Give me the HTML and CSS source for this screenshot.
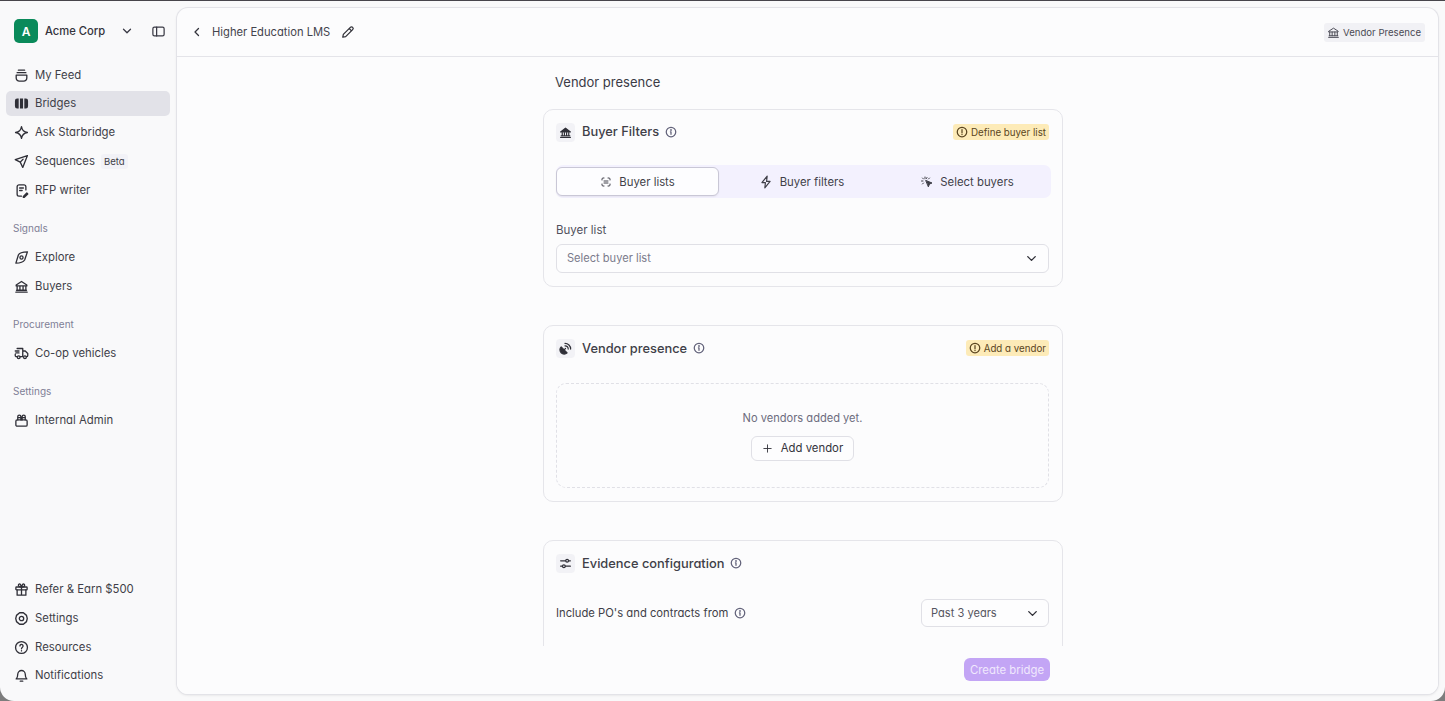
FILE: index.html
```html
<!DOCTYPE html>
<html lang="en">
<head>
<meta charset="utf-8">
<title>Higher Education LMS</title>
<link rel="stylesheet" href="styles.css">
</head>
<body>
<svg class="defs" width="0" height="0" aria-hidden="true">
  <defs>
    <symbol id="i-bank" viewBox="0 0 24 24"><path d="M3 21h18M4 18h16M5 18v-7M9.500 18v-7M14.500 18v-7M19 18v-7M3.500 11h17v-1.500L12 4 3.500 9.500z"/></symbol>
    <symbol id="i-info" viewBox="0 0 24 24"><circle cx="12" cy="12" r="9.500"/><path d="M12 16.500v-5M10.800 11.500H12"/><circle class="dot" cx="12" cy="8" r="0.600"/></symbol>
    <symbol id="i-alert" viewBox="0 0 24 24"><circle cx="12" cy="12" r="9.500"/><path d="M12 7v6.500M12 16.500v.5"/></symbol>
    <symbol id="i-chev" viewBox="0 0 24 24"><path d="M6 9l6 6 6-6"/></symbol>
  </defs>
</svg>
<div class="window">
  <aside class="sidebar">
    <div class="org">
      <span class="avatar">A</span>
      <span class="org-name">Acme Corp</span>
      <svg class="ic ic-chev"><use href="#i-chev"/></svg>
      <svg class="ic ic-panel" viewBox="0 0 24 24"><rect x="3" y="5" width="18" height="14" rx="2.500"/><path d="M9 5v14"/></svg>
    </div>
    <nav class="nav nav-main">
      <a class="item item-first"><svg class="ic" viewBox="0 0 24 24"><path d="M7 3.500h10M5 7.500h14M3.500 11.500h17V16a5 5 0 0 1-5 5h-7a5 5 0 0 1-5-5z"/></svg>My Feed</a>
      <a class="item active"><svg class="ic" viewBox="0 0 24 24"><path class="fill-only" d="M7.500 4H5a3.500 3.500 0 0 0-3.500 3.500v9A3.500 3.500 0 0 0 5 20h2.500zM9.500 4h5v16h-5zM16.500 4H19a3.500 3.500 0 0 1 3.500 3.500v9A3.500 3.500 0 0 1 19 20h-2.500z"/></svg>Bridges</a>
      <a class="item"><svg class="ic" viewBox="0 0 24 24"><path d="M12 2.500c.8 5.200 4.300 8.700 9.500 9.500-5.200.8-8.700 4.300-9.500 9.500-.8-5.200-4.300-8.700-9.500-9.500 5.200-.8 8.700-4.300 9.500-9.500z"/></svg>Ask Starbridge</a>
      <a class="item"><svg class="ic" viewBox="0 0 24 24"><path d="M21.500 2.500L2 9l8 4 4 8.500zM10 13l4.500-4.500"/></svg>Sequences<span class="beta">Beta</span></a>
      <a class="item"><svg class="ic" viewBox="0 0 24 24"><path d="M19 11V6a3 3 0 0 0-3-3H8a3 3 0 0 0-3 3v12a3 3 0 0 0 3 3h4M9 8h6M9 12h4M15 21.500l5.500-5.500 1.500 1.500-5.500 5.500H15z"/></svg>RFP writer</a>
    </nav>
    <div class="group-label">Signals</div>
    <nav class="nav">
      <a class="item"><svg class="ic" viewBox="0 0 24 24"><path d="M21.500 3c-6 0-12.500 .5-14.500 5L3 21c5.500 0 11.500-1 14-5z"/><circle cx="12" cy="12" r="2.500"/></svg>Explore</a>
      <a class="item"><svg class="ic" viewBox="0 0 24 24"><use href="#i-bank"/></svg>Buyers</a>
    </nav>
    <div class="group-label">Procurement</div>
    <nav class="nav">
      <a class="item"><svg class="ic" viewBox="0 0 24 24"><path d="M5 4h9v13H10M5 17H4a2 2 0 0 1-2-2V13M14 8h4l4 4v3a2 2 0 0 1-2 2M2 8h6M3 11h5"/><circle cx="7.500" cy="18" r="2.200"/><circle cx="17.500" cy="18" r="2.200"/></svg>Co-op vehicles</a>
    </nav>
    <div class="group-label">Settings</div>
    <nav class="nav">
      <a class="item"><svg class="ic" viewBox="0 0 24 24"><rect x="3" y="11" width="18" height="10" rx="2"/><path d="M6 11V6a2.500 2.500 0 0 1 5 0v5M13 11V6a2.500 2.500 0 0 1 5 0v5M6 7.500h5M13 7.500h5"/></svg>Internal Admin</a>
    </nav>
    <nav class="nav nav-bottom">
      <a class="item"><svg class="ic" viewBox="0 0 24 24"><rect x="3" y="8" width="18" height="4.500" rx="1"/><path d="M5 12.500V21h14v-8.500M12 8v13M12 8C9 8 7 6.500 7 5s2-2.500 3-1.500S12 8 12 8zM12 8c3 0 5-1.500 5-3s-2-2.500-3-1.500S12 8 12 8z"/></svg>Refer &amp; Earn $500</a>
      <a class="item"><svg class="ic" viewBox="0 0 24 24"><path d="M9 2.800h6l5 4.200 1.200 5-1.200 5-5 4.200H9l-5-4.200L2.800 12 4 7z"/><circle cx="12" cy="12" r="3.500"/></svg>Settings</a>
      <a class="item"><svg class="ic" viewBox="0 0 24 24"><circle cx="12" cy="12" r="9.500"/><path d="M9.500 9.500a2.500 2.500 0 1 1 4 2c-1 .7-1.500 1.200-1.500 2.500M12 17v.5"/></svg>Resources</a>
      <a class="item"><svg class="ic" viewBox="0 0 24 24"><path d="M6 10a6 6 0 0 1 12 0c0 4 1 6 2.500 7.500h-17C5 16 6 14 6 10zM10 21h4"/></svg>Notifications</a>
    </nav>
  </aside>

  <main class="panel">
    <header class="topbar">
      <svg class="ic ic-back" viewBox="0 0 24 24"><path d="M15 5l-7 7 7 7"/></svg>
      <span class="page-title">Higher Education LMS</span>
      <svg class="ic ic-edit" viewBox="0 0 24 24"><path d="M3 21l1-5L16 4a2.800 2.800 0 0 1 4 4L8 20zM14 6l4 4"/></svg>
      <span class="tag"><svg class="ic" viewBox="0 0 24 24"><use href="#i-bank"/></svg>Vendor Presence</span>
    </header>

    <div class="scroller">
      <div class="column">
        <h1 class="heading">Vendor presence</h1>

        <section class="card card-filters">
          <div class="card-head">
            <span class="chip"><svg class="ic" viewBox="0 0 24 24"><path class="solid" d="M3 11l9-7 9 7z"/><path d="M3 21h18M4 18h16M6 18v-6M10 18v-6M14 18v-6M18 18v-6"/></svg></span>
            <h2 class="card-title">Buyer Filters</h2>
            <svg class="ic ic-info"><use href="#i-info"/></svg>
            <span class="warn"><svg class="ic"><use href="#i-alert"/></svg>Define buyer list</span>
          </div>
          <div class="tabs">
            <button class="tab selected"><svg class="ic" viewBox="0 0 24 24"><path d="M4 8V6a2 2 0 0 1 2-2h2M16 4h2a2 2 0 0 1 2 2v2M20 16v2a2 2 0 0 1-2 2h-2M8 20H6a2 2 0 0 1-2-2v-2M8 10h8M8 14h8"/></svg>Buyer lists</button>
            <button class="tab tab-mid"><svg class="ic ic-tab" viewBox="0 0 24 24"><path d="M14 2L5 13h6l-1 9 9-11h-6z"/></svg>Buyer filters</button>
            <button class="tab tab-last"><svg class="ic" viewBox="0 0 24 24"><path class="solid" d="M10 9l12 5-5 2-2 5z"/><path d="M8 2v3M3 4l2 2M1 10h3M3 16l2-2M12 3l-1 2M17 4l-2 2"/></svg>Select buyers</button>
          </div>
          <label class="field-label">Buyer list</label>
          <div class="select select-wide"><span>Select buyer list</span><svg class="ic ic-chev"><use href="#i-chev"/></svg></div>
        </section>

        <section class="card card-vendor">
          <div class="card-head">
            <span class="chip"><svg class="ic" viewBox="0 0 24 24"><path class="solid" d="M4 9a7.500 7.500 0 0 0 11 11z"/><path d="M9 15l3-3M17 13a6 6 0 0 0-6-6M21.500 13A10.500 10.500 0 0 0 11 2.500"/></svg></span>
            <h2 class="card-title">Vendor presence</h2>
            <svg class="ic ic-info"><use href="#i-info"/></svg>
            <span class="warn"><svg class="ic"><use href="#i-alert"/></svg>Add a vendor</span>
          </div>
          <div class="empty">
            <p class="empty-text">No vendors added yet.</p>
            <button class="add"><svg class="ic" viewBox="0 0 24 24"><path d="M12 4v16M4 12h16"/></svg>Add vendor</button>
          </div>
        </section>

        <section class="card card-evidence">
          <div class="card-head">
            <span class="chip"><svg class="ic" viewBox="0 0 24 24"><path d="M3 7h9M18 7h3M3 17h3M12 17h9"/><circle cx="15" cy="7" r="2.600"/><circle cx="9" cy="17" r="2.600"/></svg></span>
            <h2 class="card-title">Evidence configuration</h2>
            <svg class="ic ic-info"><use href="#i-info"/></svg>
          </div>
          <div class="row">
            <span class="row-label">Include PO's and contracts from</span>
            <svg class="ic ic-info"><use href="#i-info"/></svg>
            <div class="select select-small"><span>Past 3 years</span><svg class="ic ic-chev"><use href="#i-chev"/></svg></div>
          </div>
        </section>
      </div>
    </div>

    <footer class="footer"><button class="create">Create bridge</button></footer>
  </main>
</div>
</body>
</html>
```
FILE: styles.css
```css
* { box-sizing: border-box; }
html, body { height: 100%; margin: 0; }
body {
  background: #7d7d7d;
  font-family: Inter, "Liberation Sans", sans-serif;
  font-feature-settings: "cv11";
  color: #3a3a45;
  overflow: hidden;
}
.defs { position: absolute; }
.window {
  height: 701px;
  border-top: 1px solid #47454b;
  border-radius: 0 0 14px 14px;
  background: #f9f9fa;
  display: flex;
  padding: 7px 7px 7px 0;
  overflow: hidden;
}
.ic {
  width: 14px; height: 14px;
  fill: none; stroke: currentColor; stroke-width: 2;
  stroke-linecap: round; stroke-linejoin: round;
  flex: none;
}
.solid { fill: currentColor; }
.fill-only { fill: currentColor; stroke: none; }
.sidebar {
  width: 177px; flex: none;
  display: flex; flex-direction: column;
  padding: 0 7px 0 6px;
}
.org {
  display: flex; align-items: center;
  height: 24px; margin: 11px 0 0 8px;
}
.avatar {
  width: 24px; height: 24px; border-radius: 5px;
  background: #0a8a5a; color: #fff;
  font-size: 12px; font-weight: 600;
  display: flex; align-items: center; justify-content: center;
}
.org-name { font-size: 11.200px; font-weight: 500; margin-left: 7px; color: #34343c; width: 75px; white-space: nowrap; }
.org .ic-chev { width: 14px; height: 14px; stroke-width: 2.200; }
.org .ic-panel { width: 15px; height: 15px; margin-left: 17px; stroke-width: 2; }
.nav { display: flex; flex-direction: column; }
.nav-main { margin-top: 18px; }
.item {
  height: 26px; margin-bottom: 3px;
  border-radius: 5px;
  display: flex; align-items: center; gap: 6px;
  padding-left: 8px;
  font-size: 11.350px; color: #3f3f48;
  white-space: nowrap;
}
.item:last-child { margin-bottom: 0; }
.item-first { padding-top: 2px; margin-bottom: 4px; }
.item .ic { width: 15px; height: 15px; stroke-width: 2.100; color: #2f2f37; }
.item.active { background: #e2e2e8; height: 25px; padding-bottom: 1px; }
.beta {
  font-size: 9.600px; background: #f2f2f7; border-radius: 3px;
  padding: 2px 3px; color: #3f3f48;
}
.group-label { font-size: 10px; color: #7f7f96; margin: 19px 0 10px 7px; height: 12px; line-height: 12px; }
.nav-bottom { margin-top: auto; margin-bottom: 6px; }
.nav-bottom .item:last-child { margin-top: -1px; }
.panel {
  flex: 1; min-width: 0;
  background: #fcfcfd;
  border-radius: 11px;
  box-shadow: 0 0 0 1px #e3e3e8, 0 1px 3px rgba(0,0,0,.12);
  display: flex; flex-direction: column;
  overflow: hidden;
}
.topbar {
  height: 49px; flex: none;
  border-bottom: 1px solid #e4e4e9;
  display: flex; align-items: center;
  padding: 0 13px 0 14px;
}
.ic-back { width: 12px; height: 12px; color: #33333b; stroke-width: 2.600; }
.page-title { font-size: 11.200px; margin-left: 9px; color: #44444d; white-space: nowrap; }
.ic-edit { width: 14px; height: 14px; margin-left: 11px; color: #2f2f37; stroke-width: 2.100; }
.tag {
  margin-left: auto; height: 19px;
  background: #f1f1f5; border-radius: 3px;
  display: flex; align-items: center; gap: 3px;
  padding: 0 4px 0 3px;
  font-size: 9.600px; color: #4a4a54;
  white-space: nowrap;
}
.tag .ic { width: 13px; height: 13px; stroke-width: 1.800; }
.scroller { flex: 1; min-height: 0; overflow: hidden; }
.column { width: 520px; margin: 0 0 0 366px; }
.heading {
  font-size: 13px; font-weight: 400; margin: 17px 0 0 12px;
  height: 16px; line-height: 16px; color: #3a3a45;
}
.card {
  border: 1px solid #e5e5ea; border-radius: 10px;
  padding: 0 13px 0 12px;
}
.card-filters { margin-top: 19px; height: 178px; }
.card-vendor { margin-top: 38px; height: 177px; }
.card-evidence { margin-top: 38px; height: 160px; }
.card-head { display: flex; align-items: center; height: 20px; margin-top: 12px; }
.chip {
  width: 19px; height: 19px; border-radius: 4px;
  background: #f2f2f6; color: #2f2f37;
  display: flex; align-items: center; justify-content: center;
}
.chip .ic { width: 13px; height: 13px; stroke-width: 2.200; }
.card-title { font-size: 12.850px; font-weight: 450; margin: 0 0 0 7px; color: #3f3f48; white-space: nowrap; }
.card-filters .card-title { padding-bottom: 2px; }
.ic-info { width: 12px; height: 12px; margin-left: 6px; color: #62627a; stroke-width: 2.500; }
.dot { fill: currentColor; }
.warn {
  margin-left: auto; height: 16px;
  background: #fdebb8; border-radius: 3px;
  display: flex; align-items: center; gap: 3px;
  padding: 0 3px;
  font-size: 9.750px; color: #5a4520;
  white-space: nowrap;
}
.warn .ic { width: 12px; height: 12px; color: #5a4520; stroke-width: 2.500; }
.tabs {
  margin-top: 23px; width: 495px; height: 33px;
  background: #f3f1fe; border-radius: 7px;
  display: grid; grid-template-columns: repeat(3, 1fr);
}
.tab {
  border: 0; background: none; font: inherit; padding: 0;
  font-size: 11.350px; color: #3f3f48;
  display: flex; align-items: center; justify-content: center; gap: 7px;
  white-space: nowrap;
}
.tab .ic { width: 12px; height: 12px; stroke-width: 2; }
.tab .ic-tab { width: 14px; height: 14px; }
.tab-mid { padding-right: 4px; }
.tab-last { padding-right: 2px; }
.tab.selected {
  background: #fdfdff; border: 1px solid #c9c7d6; border-radius: 6px;
  height: 29px; margin-top: 2px; width: 163px;
  box-shadow: 0 1px 2px rgba(0,0,0,.06);
}
.field-label { display: block; font-size: 11.500px; color: #50505c; margin-top: 25px; height: 14px; line-height: 14px; }
.select {
  border: 1px solid #e0e0e6; border-radius: 6px;
  background: #fdfdfe;
  display: flex; align-items: center; justify-content: space-between;
  font-size: 11.100px;
}
.select-wide { height: 29px; width: 493px; margin-top: 7px; padding: 0 9px 1px 10px; color: #7b7b8c; }
.select .ic { width: 15px; height: 15px; color: #2f2f37; stroke-width: 2.200; }
.empty {
  margin-top: 25px; width: 493px; height: 105px;
  border: 1px dashed #e0e0e6; border-radius: 10px;
  display: flex; flex-direction: column; align-items: center;
}
.empty-text { font-size: 11.100px; color: #6c6c7e; margin: 27px 0 0; height: 14px; line-height: 14px; }
.add {
  margin-top: 11px; height: 25px; width: 103px; padding: 0 0 1px;
  background: #fdfdfe; border: 1px solid #e0e0e6; border-radius: 6px;
  font: inherit; font-size: 11.350px; color: #34343c;
  display: flex; align-items: center; justify-content: center; gap: 8px;
  white-space: nowrap;
}
.add .ic { width: 11px; height: 11px; stroke-width: 2; }
.row { display: flex; align-items: center; margin-top: 26px; height: 28px; width: 493px; }
.row-label { font-size: 11.250px; color: #3f3f48; white-space: nowrap; }
.select-small { margin-left: auto; width: 128px; height: 28px; padding: 0 8px 0 9px; color: #55555f; }
.footer {
  flex: none; height: 48px; background: #fcfcfd;
  display: flex; justify-content: flex-end; align-items: flex-start;
  padding: 12px 388px 0 0;
}
.create {
  width: 86px; height: 23px; border: 0; border-radius: 6px; padding: 0;
  background: #c3a5f5; color: #f0e8fd;
  font: inherit; font-size: 11.350px; white-space: nowrap;
}
```
